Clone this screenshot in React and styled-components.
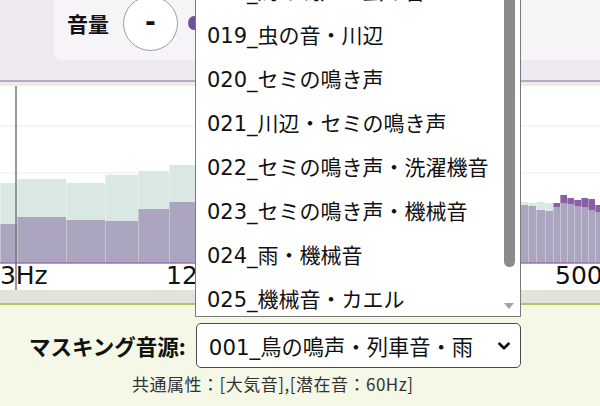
import React from 'react';
import styled, { createGlobalStyle } from 'styled-components';
import { ChevronDown } from 'lucide-react';

const LATIN_JP = `"DejaVu Sans", "Noto Sans CJK JP", sans-serif`;
const JP = `"Noto Sans CJK JP", sans-serif`;

const CHART_H = 204;
const BASE_Y = 177;

const GlobalStyle = createGlobalStyle`
  html, body {
    margin: 0;
    padding: 0;
    background: #ffffff;
  }
  body {
    font-family: ${JP};
  }
`;

const Page = styled.div`
  position: relative;
  width: 600px;
  height: 406px;
  overflow: hidden;
  display: flex;
  flex-direction: column;
`;

const TopBar = styled.div`
  display: flex;
  height: 82px;
  padding-left: 54px;
  box-sizing: border-box;
  background: #efeaf2;
  border-bottom: 2px solid #bba6c6;
`;

const VolumeCard = styled.div`
  flex: 1;
  display: flex;
  align-items: center;
  height: 60px;
  padding: 0 0 14px 13px;
  box-sizing: border-box;
  background: #f7f4f8;
  border-bottom-left-radius: 8px;
`;

const VolumeLabel = styled.span`
  font-family: ${JP};
  font-weight: 700;
  font-size: 21px;
  color: #111111;
`;

const RoundButton = styled.button`
  display: flex;
  align-items: center;
  justify-content: center;
  flex-shrink: 0;
  width: 55px;
  height: 55px;
  margin-left: 14px;
  padding: 0 0 3px;
  border: 1.5px solid #9c9c9c;
  border-radius: 50%;
  background: #ffffff;
  font-family: ${LATIN_JP};
  font-weight: 700;
  font-size: 26px;
  color: #111111;
`;

const SliderThumb = styled.span`
  width: 12px;
  height: 14px;
  margin-left: 10px;
  border-radius: 50%;
  background: #6e5296;
`;

const GapBand = styled.div`
  height: 4px;
  background: #eceee4;
`;

const ChartBox = styled.div`
  height: ${CHART_H}px;
  background: #ffffff;

  svg {
    display: block;
  }
`;

const GreyBand = styled.div`
  height: 15px;
  box-sizing: border-box;
  background: #e3e3db;
  border-bottom: 2px solid #b7c16c;
`;

const Bottom = styled.div`
  flex: 1;
  display: flex;
  flex-direction: column;
  padding-top: 18px;
  background: #f5f7e7;
`;

const SourceRow = styled.div`
  display: flex;
  align-items: center;
  gap: 10px;
  padding-left: 29px;
`;

const SourceLabel = styled.span`
  font-family: ${JP};
  font-weight: 700;
  font-size: 21.5px;
  color: #111111;
`;

const SelectBox = styled.div`
  display: flex;
  align-items: center;
  justify-content: space-between;
  width: 325px;
  height: 45px;
  padding: 0 7px 0 12px;
  box-sizing: border-box;
  border: 1px solid #4a4a4a;
  border-radius: 5px;
  background: #ffffff;
  font-family: ${LATIN_JP};
  font-size: 21.3px;
  color: #111111;
  white-space: nowrap;
`;

const InfoText = styled.div`
  margin-top: 6px;
  padding-left: 132px;
  font-family: ${JP};
  font-size: 17px;
  letter-spacing: 0.5px;
  line-height: 20px;
  color: #333333;
`;

const OptionList = styled.ul`
  position: absolute;
  left: 195px;
  top: -33px;
  width: 326px;
  height: 350px;
  margin: 0;
  padding: 0;
  box-sizing: border-box;
  list-style: none;
  overflow: hidden;
  border: 1px solid #7a7a7a;
  background: #ffffff;
`;

const OptionItem = styled.li`
  display: flex;
  align-items: center;
  height: 44px;
  padding-left: 11px;
  font-family: ${LATIN_JP};
  font-size: 21px;
  color: #111111;
  white-space: nowrap;
`;

const ScrollTrack = styled.div`
  position: absolute;
  top: 0;
  right: 0;
  bottom: 0;
  width: 19px;
  background: #ffffff;
`;

const ScrollThumb = styled.div`
  position: absolute;
  top: 0;
  left: 3px;
  width: 11px;
  height: 299px;
  border-radius: 6px;
  background: #8a8a8a;
`;

const ScrollArrow = styled.div`
  position: absolute;
  left: 3px;
  bottom: 7px;
  width: 0;
  height: 0;
  border-left: 5px solid transparent;
  border-right: 5px solid transparent;
  border-top: 6px solid #a3a3a3;
`;

const options = [
  '018_鳥の鳴声・虫の音',
  '019_虫の音・川辺',
  '020_セミの鳴き声',
  '021_川辺・セミの鳴き声',
  '022_セミの鳴き声・洗濯機音',
  '023_セミの鳴き声・機械音',
  '024_雨・機械音',
  '025_機械音・カエル',
];

// spectrum bars: x, width, top of reference (teal), top of masker (purple)
const bars = [
  [0, 17, 97, 138],
  [17, 49, 93, 131],
  [66, 39, 97, 134],
  [105, 33, 89, 135],
  [138, 31, 85, 123],
  [169, 30, 79, 116],
  [199, 28, 76, 112],
  [227, 26, 80, 115],
  [253, 24, 84, 118],
  [277, 22, 88, 121],
  [299, 20, 92, 124],
  [319, 18, 95, 126],
  [337, 17, 98, 124],
  [354, 16, 101, 123],
  [370, 15, 104, 122],
  [385, 14, 106, 121],
  [399, 13, 108, 120],
  [412, 12, 110, 121],
  [424, 11, 112, 120],
  [435, 11, 113, 121],
  [446, 10, 114, 120],
  [456, 10, 115, 121],
  [466, 9, 115, 120],
  [475, 9, 116, 121],
  [484, 9, 116, 120],
  [493, 9, 116, 120],
  [502, 9, 116, 120],
  [511, 9, 116, 119],
  [520, 8, 116, 119],
  [528, 8, 117, 120],
  [536, 9, 116, 124],
  [545, 8, 117, 125],
  [553, 7, 121, 117],
  [560, 7, 117, 109],
  [567, 7, 118, 112],
  [574, 7, 120, 114],
  [581, 7, 121, 112],
  [588, 7, 124, 113],
  [595, 6, 126, 119],
];

function Spectrum() {
  return (
    <svg width="600" height={CHART_H} viewBox={`0 0 600 ${CHART_H}`}>
      <line x1="0" y1="40" x2="600" y2="40" stroke="#ebebe3" strokeWidth="1.2" />
      <line x1="0" y1="87" x2="600" y2="87" stroke="#ebebe3" strokeWidth="1.2" />
      <line x1="0" y1="132" x2="600" y2="132" stroke="#ebebe3" strokeWidth="1.2" />
      {bars.map(([x, w, teal, purple]) => (
        <g key={x}>
          <rect x={x} y={teal} width={w} height={BASE_Y - teal} fill="#d9e8e3" />
          <rect x={x} y={purple} width={w} height={BASE_Y - purple} fill="#aca5bf" />
          {purple < teal && (
            <rect x={x} y={purple} width={w} height={teal - purple} fill="#8b5ea8" />
          )}
          <line
            x1={x + 0.5}
            y1={Math.min(teal, purple)}
            x2={x + 0.5}
            y2={BASE_Y}
            stroke="#ffffff"
            strokeOpacity="0.35"
            strokeWidth="1"
          />
        </g>
      ))}
      <line x1="0" y1={BASE_Y} x2="600" y2={BASE_Y} stroke="#9b74b3" strokeWidth="1.5" />
      <line x1="16" y1="0" x2="16" y2={CHART_H} stroke="#777777" strokeWidth="1.5" />
      <g fontFamily='"DejaVu Sans", sans-serif' fontSize="25" fill="#111111">
        <text x="-16" y="198">63Hz</text>
        <text x="166" y="198">125Hz</text>
        <text x="555" y="198">500Hz</text>
      </g>
    </svg>
  );
}

export default function App() {
  return (
    <Page>
      <GlobalStyle />
      <TopBar>
        <VolumeCard>
          <VolumeLabel>音量</VolumeLabel>
          <RoundButton type="button">-</RoundButton>
          <SliderThumb />
        </VolumeCard>
      </TopBar>
      <GapBand />
      <ChartBox>
        <Spectrum />
      </ChartBox>
      <GreyBand />
      <Bottom>
        <SourceRow>
          <SourceLabel>マスキング音源:</SourceLabel>
          <SelectBox>
            <span>001_鳥の鳴声・列車音・雨</span>
            <ChevronDown size={18} strokeWidth={3.5} color="#111111" />
          </SelectBox>
        </SourceRow>
        <InfoText>共通属性：[大気音],[潜在音：60Hz]</InfoText>
      </Bottom>
      <OptionList>
        {options.map((o) => (
          <OptionItem key={o}>{o}</OptionItem>
        ))}
        <ScrollTrack>
          <ScrollThumb />
          <ScrollArrow />
        </ScrollTrack>
      </OptionList>
    </Page>
  );
}
